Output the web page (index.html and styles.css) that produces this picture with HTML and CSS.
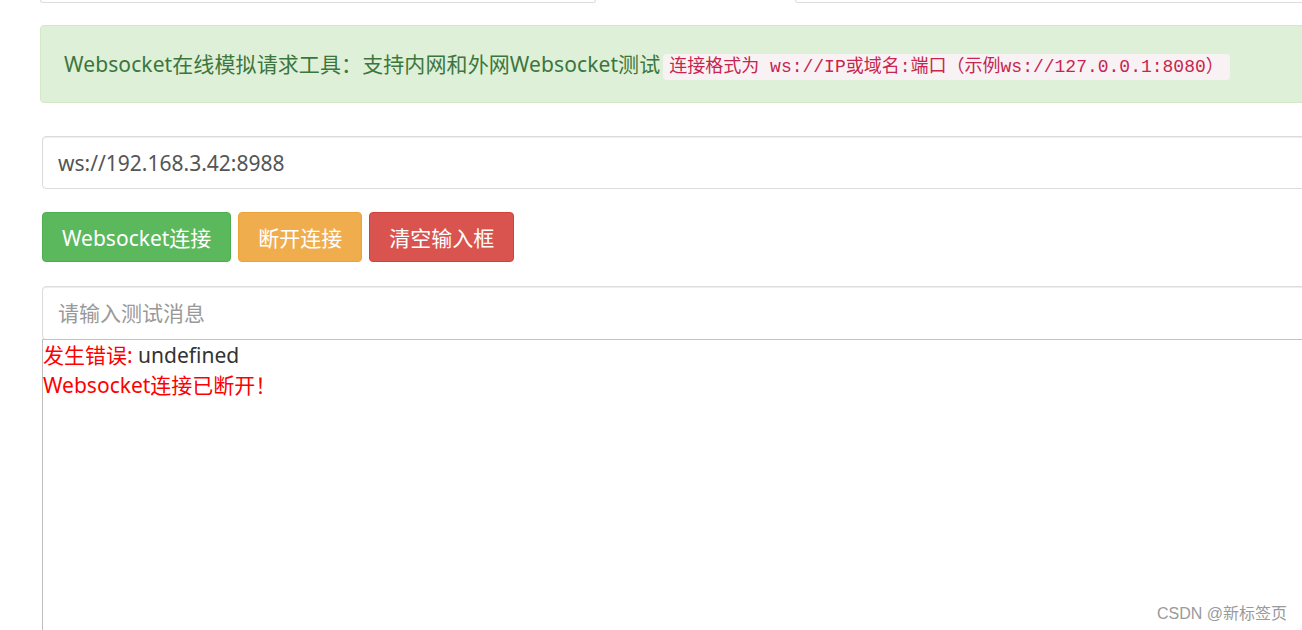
FILE: index.html
```html
<!DOCTYPE html>
<html lang="zh-CN">
<head>
    <meta charset="UTF-8">
    <title>Websocket在线测试</title>
    <link rel="stylesheet" href="styles.css">
</head>
<body>
    <div class="page">
        <!-- верх сторінки прокручено, видно лише низ полів -->
        <div class="top-row">
            <div class="top-field top-field-left"></div>
            <div class="top-field top-field-right"></div>
        </div>

        <div class="alert-success">
            Websocket在线模拟请求工具：支持内网和外网Websocket测试<code>连接格式为 ws://IP或域名:端口（示例ws://127.0.0.1:8080）</code>
        </div>

        <div class="form">
            <input class="form-control url-input" type="text" value="ws://192.168.3.42:8988">

            <div class="btn-row">
                <button class="btn btn-success">Websocket连接</button>
                <button class="btn btn-warning">断开连接</button>
                <button class="btn btn-danger">清空输入框</button>
            </div>

            <input class="form-control msg-input" type="text" placeholder="请输入测试消息">

            <div class="output">
                <div class="log-line"><span class="log-label">发生错误: </span>undefined</div>
                <div class="log-line"><span class="log-label">Websocket连接已断开！</span></div>
            </div>
        </div>
    </div>

    <div class="watermark">CSDN @新标签页</div>
</body>
</html>
```

FILE: styles.css
```css
* {
    margin: 0;
    padding: 0;
    box-sizing: border-box;
}

body {
    font-family: "Noto Sans", "Noto Sans CJK SC", sans-serif;
    background: #fff;
    color: #333;
    overflow: hidden;
    height: 630px;
}

.page {
    padding-left: 40px;
    width: 1400px;
}

.top-row {
    display: flex;
    height: 3px;
}

.top-field {
    height: 3px;
    border: 1px solid #ddd;
    border-top: none;
    border-radius: 0 0 4px 4px;
}

.top-field-left {
    width: 556px;
}

.top-field-right {
    margin-left: 199px;
    flex: 1;
}

/* зелене повідомлення */
.alert-success {
    margin-top: 22px;
    height: 78px;
    padding: 0 23px;
    background: #dff0d8;
    border: 1px solid #d6e9c6;
    border-radius: 4px;
    color: #3c763d;
    font-size: 21px;
    letter-spacing: 0.1px;
    line-height: 76px;
    white-space: nowrap;
}

code {
    font-family: "Liberation Mono", "Noto Sans CJK SC", monospace;
    font-size: 18px;
    letter-spacing: 0;
    color: #c7254e;
    background: #f9f2f4;
    border-radius: 4px;
    padding: 3px 6px;
    margin-left: 3px;
}

.form {
    padding-left: 2px;
}

.form-control {
    display: block;
    width: 1320px;
    height: 53px;
    padding: 0 15px;
    border: 1px solid #dcdcdc;
    border-radius: 4px;
    box-shadow: inset 0 1px 1px rgba(0,0,0,0.075);
    font-family: "Noto Sans", "Noto Sans CJK SC", sans-serif;
    font-size: 21px;
    color: #555;
    outline: none;
}

.form-control::placeholder {
    color: #999;
}

.url-input {
    margin-top: 33px;
}

.btn-row {
    display: flex;
    gap: 7px;
    margin-top: 23px;
}

.btn {
    height: 50px;
    padding: 0 19px;
    border: 1px solid transparent;
    border-radius: 4px;
    font-family: "Noto Sans", "Noto Sans CJK SC", sans-serif;
    font-size: 21px;
    color: #fff;
    cursor: pointer;
}

.btn-success {
    background: #5cb85c;
    border-color: #4cae4c;
}

.btn-warning {
    background: #f0ad4e;
    border-color: #eea236;
}

.btn-danger {
    background: #d9534f;
    border-color: #d43f3a;
}

.msg-input {
    margin-top: 24px;
    height: 54px;
}

/* вивід логів */
.output {
    height: 320px;
    border-top: 1px solid #c4c4c4;
    border-left: 1px solid #bdbdbd;
    font-size: 21px;
    line-height: 30px;
    color: #333;
    margin-top: -1px;
}

.log-label {
    color: #f00;
}

.watermark {
    position: absolute;
    right: 15px;
    top: 600px;
    font-family: "Liberation Sans", "Noto Sans CJK SC", sans-serif;
    font-size: 16px;
    color: #9a9a9a;
}
```
